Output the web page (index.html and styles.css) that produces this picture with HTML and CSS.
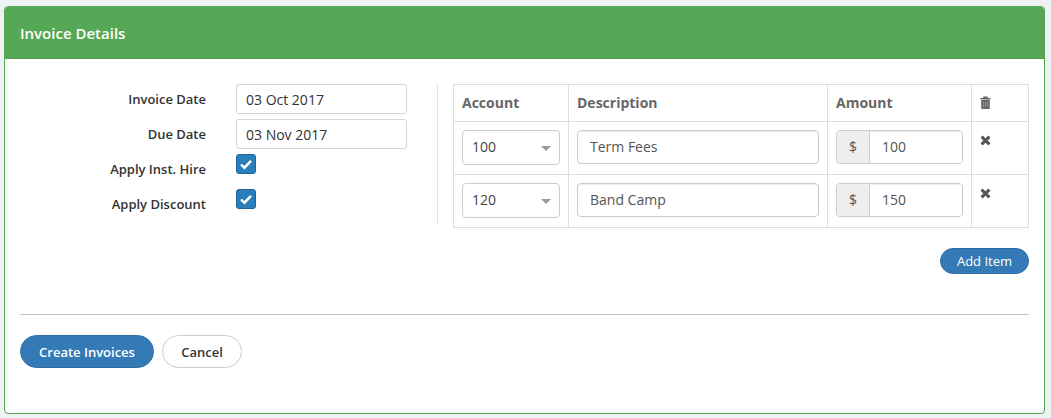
FILE: index.html
```html
<!DOCTYPE html>
<html lang="en">

<head>
    <meta charset="UTF-8">
    <meta name="viewport" content="width=device-width, initial-scale=1.0">
    <title>Invoice Details</title>
    <link rel="stylesheet" href="styles.css">
</head>

<body>

    <section class="panel">
        <header class="panel-heading">Invoice Details</header>

        <form class="panel-body">
            <div class="columns">
                <div class="details">
                    <div class="field">
                        <label class="field-label">Invoice Date</label>
                        <input class="text-input date-input" type="text" value="03 Oct 2017">
                    </div>
                    <div class="field">
                        <label class="field-label">Due Date</label>
                        <input class="text-input date-input" type="text" value="03 Nov 2017">
                    </div>
                    <div class="field">
                        <label class="field-label">Apply Inst. Hire</label>
                        <span class="checkbox">
                            <svg viewBox="0 0 20 20" width="20" height="20"><path d="M5 10.5l3.4 3.2L15 6.8" fill="none" stroke="#fff" stroke-width="2.4"/></svg>
                        </span>
                    </div>
                    <div class="field">
                        <label class="field-label">Apply Discount</label>
                        <span class="checkbox">
                            <svg viewBox="0 0 20 20" width="20" height="20"><path d="M5 10.5l3.4 3.2L15 6.8" fill="none" stroke="#fff" stroke-width="2.4"/></svg>
                        </span>
                    </div>
                </div>

                <div class="items">
                    <table class="items-table">
                        <thead>
                            <tr>
                                <th class="col-account">Account</th>
                                <th class="col-description">Description</th>
                                <th class="col-amount">Amount</th>
                                <th class="col-remove">
                                    <svg class="trash" viewBox="0 0 12 14" width="11" height="13">
                                        <path d="M4 0.5h4l1 1.5h2.5v1.6h-11V2H3zM1.3 4.4h9.4V13a1 1 0 0 1-1 1H2.3a1 1 0 0 1-1-1z" fill="#666"/>
                                        <path d="M3.6 6v6M6 6v6M8.4 6v6" stroke="#99a" stroke-width="1"/>
                                    </svg>
                                </th>
                            </tr>
                        </thead>
                        <tbody>
                            <tr>
                                <td>
                                    <div class="select"><span>100</span><i class="caret"></i></div>
                                </td>
                                <td><input class="text-input row-input" type="text" value="Term Fees"></td>
                                <td>
                                    <div class="input-group"><span class="addon">$</span><input class="group-input" type="text" value="100"></div>
                                </td>
                                <td class="remove-cell">
                                    <svg class="cross" viewBox="0 0 11 11" width="11" height="11"><path d="M1.6 1.6l7.8 7.8M9.4 1.6l-7.8 7.8" stroke="#555" stroke-width="3"/></svg>
                                </td>
                            </tr>
                            <tr>
                                <td>
                                    <div class="select"><span>120</span><i class="caret"></i></div>
                                </td>
                                <td><input class="text-input row-input" type="text" value="Band Camp"></td>
                                <td>
                                    <div class="input-group"><span class="addon">$</span><input class="group-input" type="text" value="150"></div>
                                </td>
                                <td class="remove-cell">
                                    <svg class="cross" viewBox="0 0 11 11" width="11" height="11"><path d="M1.6 1.6l7.8 7.8M9.4 1.6l-7.8 7.8" stroke="#555" stroke-width="3"/></svg>
                                </td>
                            </tr>
                        </tbody>
                    </table>
                    <div class="add-row">
                        <button class="btn btn-primary btn-small" type="button">Add Item</button>
                    </div>
                </div>
            </div>

            <hr class="divider">

            <div class="actions">
                <button class="btn btn-primary btn-large" type="button">Create Invoices</button>
                <button class="btn btn-default btn-large" type="button">Cancel</button>
            </div>
        </form>
    </section>

</body>

</html>
```

FILE: styles.css
```css
* {
    box-sizing: border-box;
}

html, body {
    height: 100%;
}

body {
    font-family: 'Open Sans', sans-serif;
    font-size: 14px;
    color: #333;
    margin: 0;
    padding: 6px 6px 4px 4px;
    background-color: #eef2f3;
}

.panel {
    height: 408px;
    background-color: #ffffff;
    border: 1px solid #55a956;
    border-radius: 4px;
    overflow: hidden;
}

.panel-heading {
    height: 52px;
    padding: 0 15px;
    line-height: 52px;
    background-color: #55a956;
    color: #ffffff;
    font-size: 15px;
    font-weight: 600;
    border-bottom: 1px solid #4f9e50;
}

.panel-body {
    padding: 25px 15px 0;
}

.columns {
    display: flex;
    height: 230px;
}

.details {
    width: 418px;
    height: 140px;
    border-right: 1px solid #e3e3e3;
}

.field {
    display: flex;
    align-items: flex-start;
    height: 35px;
}

.field-label {
    width: 186px;
    line-height: 30px;
    font-size: 13px;
    font-weight: 600;
    text-align: right;
    margin-right: 30px;
}

.text-input {
    height: 30px;
    padding: 0 9px;
    font-family: inherit;
    font-size: 14px;
    color: #333;
    background-color: #fff;
    border: 1px solid #d4d4d4;
    border-radius: 3px;
    outline: none;
}

.date-input {
    width: 171px;
}

.checkbox {
    display: block;
    width: 20px;
    height: 20px;
    background-color: #2a7fba;
    border: 1px solid #1d6397;
    border-radius: 3px;
}

.checkbox svg {
    display: block;
    margin: -1px;
}

.items {
    margin-left: 15px;
    width: 576px;
}

.items-table {
    width: 576px;
    table-layout: fixed;
    border-collapse: collapse;
}

.items-table th,
.items-table td {
    border: 1px solid #ddd;
    padding: 8px;
    vertical-align: top;
}

.items-table th {
    height: 37px;
    padding-top: 6px;
    padding-bottom: 8px;
    text-align: left;
    vertical-align: middle;
    font-size: 14px;
    font-weight: 700;
    color: #666;
}

.items-table td {
    height: 53px;
}

.col-account {
    width: 115px;
}

.col-description {
    width: 259px;
}

.col-amount {
    width: 144px;
}

.trash {
    display: block;
}

.select {
    display: flex;
    align-items: center;
    justify-content: space-between;
    width: 98px;
    height: 35px;
    padding: 0 8px 2px 9px;
    font-size: 14px;
    color: #444;
    background-color: #fff;
    border: 1px solid #ccc;
    border-radius: 4px;
}

.caret {
    width: 0;
    height: 0;
    margin-top: 3px;
    border-left: 5px solid transparent;
    border-right: 5px solid transparent;
    border-top: 5px solid #999;
}

.row-input {
    display: block;
    width: 242px;
    height: 34px;
    padding: 0 12px 1px;
    color: #555;
    border-color: #ccc;
    border-radius: 4px;
    box-shadow: inset 0 1px 1px rgba(0, 0, 0, .075);
}

.input-group {
    display: flex;
    width: 127px;
    height: 34px;
    border: 1px solid #ccc;
    border-radius: 4px;
    overflow: hidden;
}

.addon {
    width: 33px;
    line-height: 31px;
    text-align: center;
    color: #555;
    background-color: #eee;
    border-right: 1px solid #ccc;
}

.group-input {
    flex: 1;
    min-width: 0;
    padding: 0 12px 1px;
    font-family: inherit;
    font-size: 14px;
    color: #555;
    border: none;
    outline: none;
    box-shadow: inset 0 1px 1px rgba(0, 0, 0, .075);
}

.remove-cell {
    padding-top: 13px !important;
}

.cross {
    display: block;
}

.add-row {
    display: flex;
    justify-content: flex-end;
    margin-top: 20px;
}

.btn {
    font-family: inherit;
    font-size: 13px;
    border-radius: 17px;
    cursor: pointer;
}

.btn-primary {
    color: #fff;
    background-color: #337ab7;
    border: 1px solid #2e6da4;
}

.btn-default {
    color: #333;
    background-color: #fff;
    border: 1px solid #ccc;
}

.btn-small {
    width: 89px;
    height: 26px;
    padding: 0;
}

.btn-large {
    height: 33px;
    font-weight: 600;
    padding: 0;
}

.btn-large.btn-primary {
    width: 134px;
}

.btn-large.btn-default {
    width: 80px;
}

.divider {
    margin: 0;
    border: none;
    border-top: 1px solid #c4c4c8;
}

.actions {
    display: flex;
    gap: 8px;
    margin-top: 20px;
}
```
